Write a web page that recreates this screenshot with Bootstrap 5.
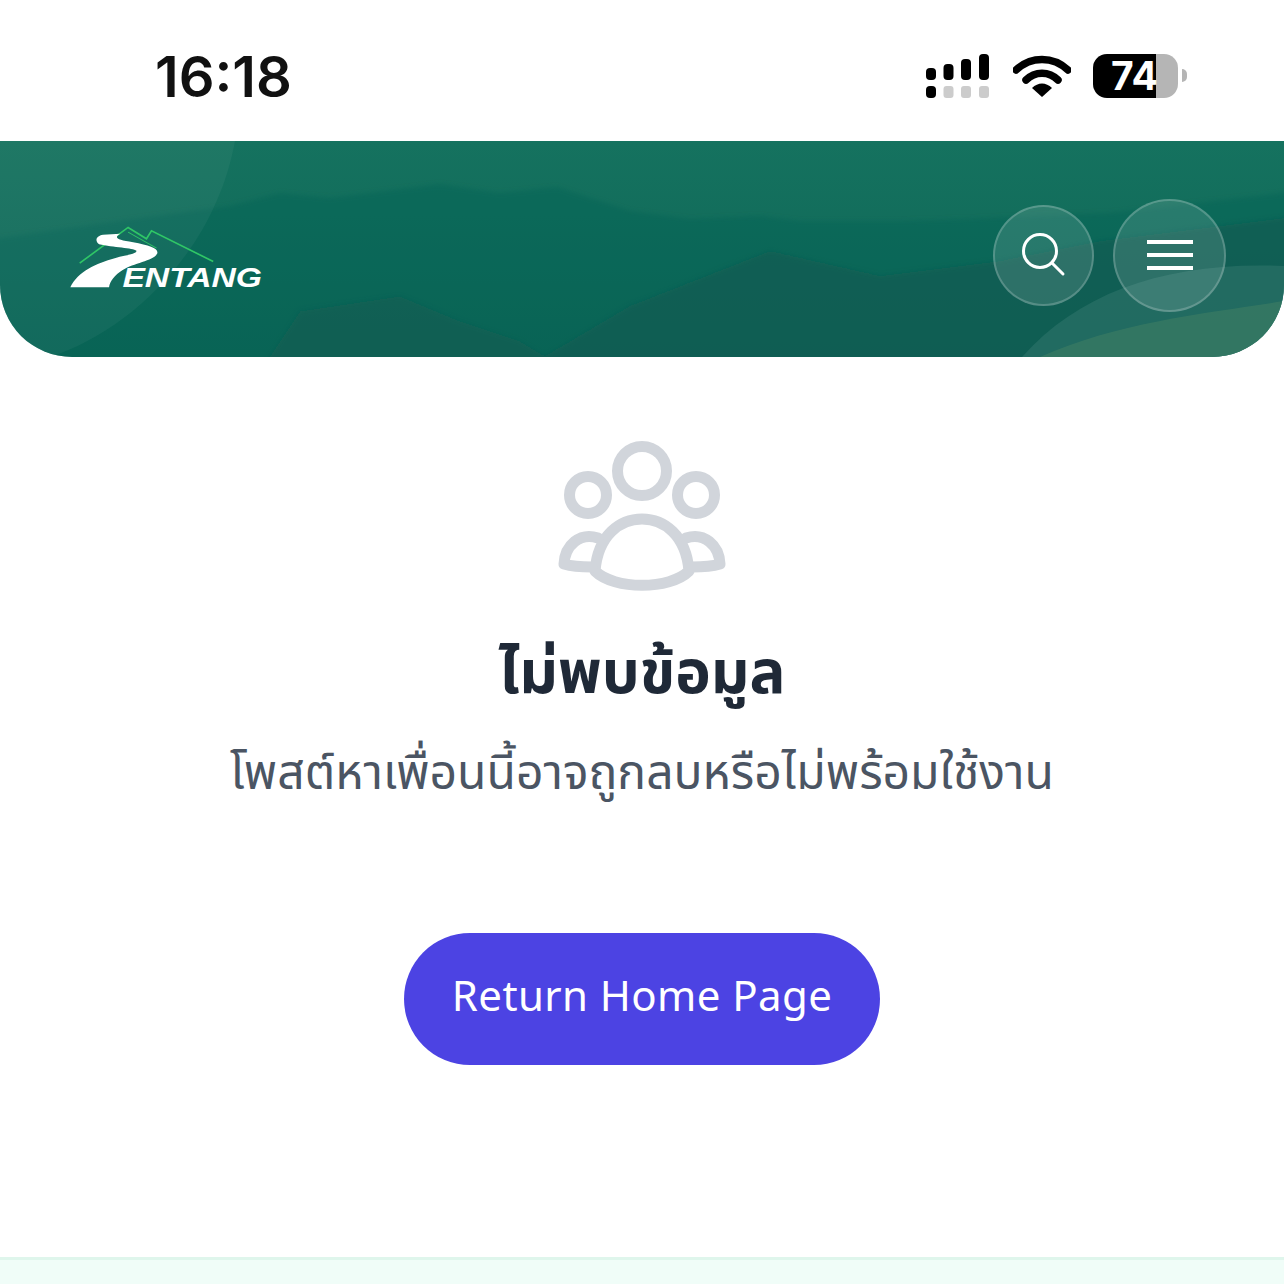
<!DOCTYPE html>
<html lang="th">
<head>
<meta charset="UTF-8" />
<title>Not found</title>
<link href="https://cdn.jsdelivr.net/npm/bootstrap@5.3.0/dist/css/bootstrap.min.css" rel="stylesheet" />
<style>
body { background: #fff; height: 1284px; overflow: hidden; font-family: "Noto Sans", "Noto Sans Thai", "Liberation Sans", sans-serif; }
.status-row { height: 141px; padding: 0 97px 0 155px; }
.clock { font-family: Inter, "Liberation Sans", sans-serif; font-size: 56px; font-weight: 600; color: #111; line-height: 1; letter-spacing: 0; padding-top: 12px; }
.status-icons { gap: 22px; padding-top: 10px; }
.batt { width: 85px; height: 44px; border-radius: 14px; background: linear-gradient(90deg, #000 74%, #b5b5b5 74%); color: #fff; font-family: Inter, "Liberation Sans", sans-serif; font-weight: 700; font-size: 39px; line-height: 44px; padding-left: 18px; }
.batt-tip { width: 5px; height: 13px; margin-left: 4px; border-radius: 0 7px 7px 0; background: #b5b5b5; }
.hero { height: 216px; border-radius: 0 0 72px 72px; overflow: hidden; padding: 12px 58px 0 68px; background: linear-gradient(180deg, #15725f, #0e6656); }
.hero-bg { position: absolute; inset: 0; width: 100%; height: 100%; }
.hero-logo { position: relative; margin-top: 3px; overflow: visible; }
.round-btn { position: relative; border-radius: 50%; border: 2px solid rgba(255,255,255,.2); background: rgba(255,255,255,.12); padding: 0; }
.btn-search { width: 101px; height: 101px; }
.btn-menu { width: 113px; height: 113px; }
.hero-btns { gap: 19px; }
.empty-icon { margin: 73px 4px 0 0; }
.empty-title { font-size: 60px; font-weight: 700; color: #1f2937; line-height: 1.2; margin: 34px 0 0; }
.empty-sub { font-size: 48px; color: #4b5563; line-height: 1.2; margin: 36px 0 0; }
.home-btn { width: 476px; height: 132px; margin-top: 133px; padding-bottom: 15px; border-radius: 66px; background: #4c43e3; border: 0; color: #fff; font-size: 42px; font-weight: 400; letter-spacing: .4px; }
.home-btn:hover { background: #4c43e3; color: #fff; }
.foot-strip { position: fixed; left: 0; right: 0; bottom: 0; height: 27px; background: #f0fdf8; border-top: 3px solid #dff6ec; }
</style>
</head>
<body>
  <div class="status-row d-flex justify-content-between align-items-center">
    <div class="clock">16:18</div>
    <div class="status-icons d-flex align-items-center">
      <svg width="66" height="46" viewBox="0 0 66 46">
        <rect x="1" y="15" width="10" height="12" rx="4" fill="#000"/>
        <rect x="18.5" y="11" width="10" height="16" rx="4" fill="#000"/>
        <rect x="36" y="6" width="10" height="21" rx="4" fill="#000"/>
        <rect x="54" y="1" width="10" height="26" rx="4" fill="#000"/>
        <rect x="1" y="33" width="10" height="12" rx="4" fill="#000"/>
        <rect x="18.5" y="33" width="10" height="12" rx="3" fill="#ccc"/>
        <rect x="36" y="33" width="10" height="12" rx="3" fill="#ccc"/>
        <rect x="54" y="33" width="10" height="12" rx="3" fill="#ccc"/>
      </svg>
      <svg width="58" height="42" viewBox="0 0 58 42">
        <path d="M3 15 C18 1 40 1 55 15" fill="none" stroke="#000" stroke-width="7.5" stroke-linecap="round"/>
        <path d="M13 25 C22 16 36 16 45 25" fill="none" stroke="#000" stroke-width="7.5" stroke-linecap="round"/>
        <path d="M19 33 C25 27 33 27 39 33 L29 42 Z" fill="#000"/>
      </svg>
      <div class="d-flex align-items-center">
        <div class="batt">74</div>
        <div class="batt-tip"></div>
      </div>
    </div>
  </div>

  <header class="hero position-relative d-flex justify-content-between align-items-center">
    <svg class="hero-bg" viewBox="0 0 1284 216" preserveAspectRatio="none">
      <defs>
        <filter id="soft" x="-5%" y="-5%" width="110%" height="110%"><feGaussianBlur stdDeviation="2.5"/></filter>
      </defs>
      <g filter="url(#soft)">
        <path d="M-20 100 L120 80 L230 65 L280 52 L330 57 L440 43 L500 52 L557 46 L630 70 L690 78 L760 75 L800 80 L900 80 L970 78 L1030 75 L1110 72 L1300 50 L1300 230 L-20 230 Z" fill="#0c6154" opacity=".4"/>
        <path d="M520 230 L630 165 L770 110 L880 135 L1000 120 L1100 100 L1300 75 L1300 230 Z" fill="#0a5b52" opacity=".65"/>
        <path d="M300 170 L400 155 L460 180 L520 200 L570 230 L260 230 Z" fill="#0a5b50" opacity=".5"/>
      </g>
      <path d="M1022 216 C1080 150 1170 120 1284 125 L1284 216 Z" fill="#4b8a80" opacity=".3"/>
      <path d="M1040 216 C1120 180 1210 172 1284 160 L1284 216 Z" fill="#74a06a" opacity=".22"/>
      <path d="M0 0 L235 0 C215 110 130 190 50 216 L0 216 Z" fill="#ffffff" opacity=".045"/>
    </svg>
    <svg class="hero-logo" width="197" height="67" viewBox="205 265 590 200">
      <path d="M240 385 L385 278 L440 312 L455 288 L640 380" fill="none" stroke="#2fc566" stroke-width="5"/>
      <path d="M385 292 L470 340" fill="none" stroke="#2fc566" stroke-width="3"/>
      <path d="M212 457 C235 410 290 385 345 370 C380 360 412 358 410 348 C400 338 340 338 298 328 C285 318 288 304 310 300 L362 297 C340 308 352 316 400 322 C450 332 478 340 472 357 C460 378 400 385 370 405 C345 420 330 440 328 457 Z" fill="#fff"/>
      <text x="368" y="457" font-family="Liberation Sans, sans-serif" font-weight="700" font-style="italic" font-size="80" textLength="418" lengthAdjust="spacingAndGlyphs" fill="#fff">ENTANG</text>
    </svg>
    <div class="hero-btns position-relative d-flex align-items-center">
      <button class="round-btn btn-search d-flex align-items-center justify-content-center" type="button" aria-label="Search">
        <svg width="46" height="46" viewBox="0 0 46 46" fill="none" stroke="#fff" stroke-width="3" stroke-linecap="round">
          <circle cx="19" cy="19" r="16.5"/>
          <path d="M31 31 L42 42"/>
        </svg>
      </button>
      <button class="round-btn btn-menu d-flex align-items-center justify-content-center" type="button" aria-label="Menu">
        <svg width="46" height="30" viewBox="0 0 46 30" stroke="#fff" stroke-width="4">
          <path d="M0 2 H46 M0 15 H46 M0 28 H46"/>
        </svg>
      </button>
    </div>
  </header>

  <main class="d-flex flex-column align-items-center text-center">
    <svg class="empty-icon" width="200" height="170" viewBox="0 0 200 170" fill="none" stroke="#d1d5db" stroke-width="11" stroke-linecap="round" stroke-linejoin="round">
      <circle cx="102" cy="41" r="24.5"/>
      <circle cx="48" cy="65" r="18.5"/>
      <circle cx="156" cy="65" r="18.5"/>
      <path d="M55 141 C58 105 80 89 102 89 C124 89 146 105 149 141 C130 160 74 160 55 141 Z"/>
      <path d="M58 108 C40 102 25 115 24 134 C34 137 44 137 52 137"/>
      <path d="M146 108 C164 102 179 115 180 134 C170 137 160 137 152 137"/>
    </svg>
    <h1 class="empty-title">ไม่พบข้อมูล</h1>
    <p class="empty-sub">โพสต์หาเพื่อนนี้อาจถูกลบหรือไม่พร้อมใช้งาน</p>
    <button class="btn home-btn" type="button">Return Home Page</button>
  </main>

  <div class="foot-strip"></div>
  <script src="https://cdn.jsdelivr.net/npm/bootstrap@5.3.0/dist/js/bootstrap.bundle.min.js"></script>
</body>
</html>
